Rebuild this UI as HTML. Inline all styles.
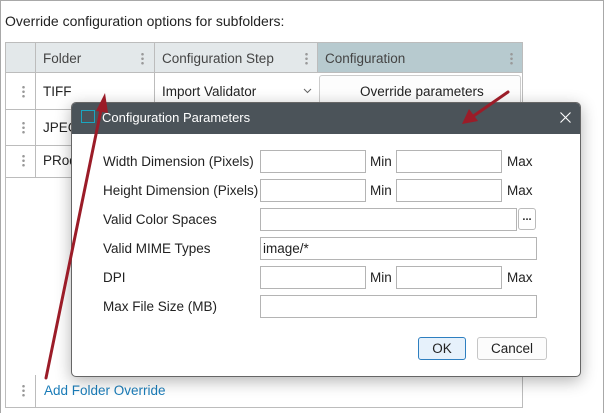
<!DOCTYPE html><html><head><style>
*{box-sizing:border-box;margin:0;padding:0}
body{width:604px;height:413px;overflow:hidden;background:#fff;font-family:"Liberation Sans",sans-serif;font-size:13.5px;color:#222;position:relative}
.a{position:absolute}
.frame{left:0;top:0;width:604px;height:413px;border:1px solid #a8a8a8;border-bottom:none}
.dots{position:absolute;width:3px;height:13px;background:radial-gradient(circle,#999 1.2px,transparent 1.4px) 0 0/3px 4.5px repeat-y}
.in{position:absolute;border:1px solid #b4b4b4;background:#fff;height:23px}
.lb{position:absolute;left:103px;font-size:13.5px}
.t{position:absolute;font-size:13.5px}
</style></head><body>
<div class="a frame"></div>
<div class="t" style="left:5px;top:13px;font-size:14px">Override configuration options for subfolders:</div>
<div class="a" style="left:5px;top:42px;width:518px;height:366px;border:1px solid #bcbcbc"></div>
<div class="a" style="left:5px;top:42px;width:313px;height:31px;background:#e3e8ea;border:1px solid #bcbcbc"></div>
<div class="a" style="left:317px;top:42px;width:206px;height:31px;background:#b7cacf;border:1px solid #bcbcbc"></div>
<div class="a" style="left:35px;top:42px;width:1px;height:136px;background:#bcbcbc"></div>
<div class="a" style="left:154px;top:42px;width:1px;height:31px;background:#bcbcbc"></div>
<div class="a" style="left:5px;top:109px;width:150px;height:1px;background:#bcbcbc"></div>
<div class="a" style="left:5px;top:145px;width:150px;height:1px;background:#bcbcbc"></div>
<div class="a" style="left:5px;top:177px;width:518px;height:1px;background:#bcbcbc"></div>
<div class="a" style="left:154px;top:73px;width:1px;height:105px;background:#bcbcbc"></div>
<div class="a" style="left:35px;top:375px;width:1px;height:33px;background:#bcbcbc"></div>
<div class="t" style="left:43px;top:51px;color:#444">Folder</div>
<div class="t" style="left:162px;top:51px;color:#444">Configuration Step</div>
<div class="t" style="left:325px;top:51px;color:#444">Configuration</div>
<div class="dots" style="left:141px;top:52px"></div>
<div class="dots" style="left:305px;top:52px"></div>
<div class="dots" style="left:510px;top:52px"></div>
<div class="dots" style="left:22px;top:85px"></div>
<div class="dots" style="left:22px;top:121px"></div>
<div class="dots" style="left:22px;top:154px"></div>
<div class="dots" style="left:22px;top:384px"></div>
<div class="t" style="left:43px;top:84px">TIFF</div>
<div class="t" style="left:43px;top:120px">JPEG</div>
<div class="t" style="left:43px;top:153px">PRod</div>
<div class="t" style="left:162px;top:84px">Import Validator</div>
<svg class="a" style="left:303px;top:88px" width="9" height="6"><path d="M1 1 L4.5 4.5 L8 1" stroke="#666" fill="none" stroke-width="1"/></svg>
<div class="a" style="left:319px;top:75px;width:202px;height:32px;border:1px solid #ccc;border-radius:3px;background:#fdfdfd"></div>
<div class="t" style="left:360px;top:84px">Override parameters</div>
<div class="t" style="left:44px;top:383px;color:#1a7cb8">Add Folder Override</div>
<div class="a" style="left:71px;top:102px;width:510px;height:275px;background:#fff;border:1px solid #666;border-radius:5px;box-shadow:0 4px 16px rgba(0,0,0,.3);overflow:hidden">
<div style="height:31px;background:#4b5359"></div>
</div>
<div class="a" style="left:81px;top:110px;width:14px;height:13px;border:1.5px solid #1aa6c0"></div>
<div class="t" style="left:102px;top:110px;color:#fff;font-size:13px">Configuration Parameters</div>
<svg class="a" style="left:560px;top:112px" width="11" height="11"><path d="M0.5 0.5 L10.5 10.5 M10.5 0.5 L0.5 10.5" stroke="#fff" stroke-width="1.1"/></svg>
<div class="lb" style="top:154px">Width Dimension (Pixels)</div>
<div class="lb" style="top:183px">Height Dimension (Pixels)</div>
<div class="lb" style="top:212px">Valid Color Spaces</div>
<div class="lb" style="top:241px">Valid MIME Types</div>
<div class="lb" style="top:270px">DPI</div>
<div class="lb" style="top:299px">Max File Size (MB)</div>
<div class="in" style="left:260px;top:150px;width:106px"></div><div class="t" style="left:370px;top:154px">Min</div><div class="in" style="left:396px;top:150px;width:106px"></div><div class="t" style="left:507px;top:154px">Max</div>
<div class="in" style="left:260px;top:179px;width:106px"></div><div class="t" style="left:370px;top:183px">Min</div><div class="in" style="left:396px;top:179px;width:106px"></div><div class="t" style="left:507px;top:183px">Max</div>
<div class="in" style="left:260px;top:208px;width:257px"></div>
<div class="a" style="left:518px;top:208px;width:18px;height:22px;border:1px solid #bbb;border-radius:3px;font-size:11px;text-align:center;line-height:16px;font-weight:bold">...</div>
<div class="in" style="left:260px;top:237px;width:277px"></div><div class="t" style="left:263px;top:241px">image/*</div>
<div class="in" style="left:260px;top:266px;width:106px"></div><div class="t" style="left:370px;top:270px">Min</div><div class="in" style="left:396px;top:266px;width:106px"></div><div class="t" style="left:507px;top:270px">Max</div>
<div class="in" style="left:260px;top:295px;width:277px"></div>
<div class="a" style="left:418px;top:337px;width:48px;height:23px;border:1px solid #2e7fc0;border-radius:3px;background:#e6f1fb;text-align:center;line-height:21px">OK</div>
<div class="a" style="left:477px;top:337px;width:70px;height:23px;border:1px solid #c6c6c6;border-radius:3px;background:#fcfcfc;text-align:center;line-height:21px">Cancel</div>
<svg class="a" style="left:0;top:0" width="604" height="413"><g stroke="#9b1c28" stroke-width="3" fill="#9b1c28" stroke-linecap="round">
<line x1="46" y1="378" x2="102" y2="105"/><polygon points="105,93 96,111 108,113" stroke="none"/>
<line x1="508" y1="92" x2="472" y2="117"/><polygon points="462,124 469,109 478,121" stroke="none"/></g></svg>
</body></html>
